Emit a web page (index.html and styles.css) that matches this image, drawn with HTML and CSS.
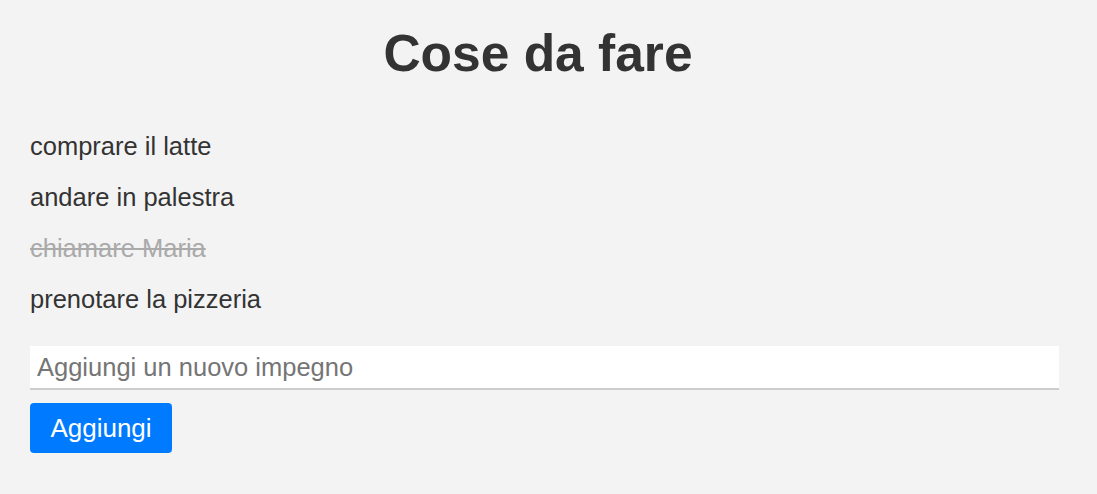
FILE: index.html
```html
<!DOCTYPE html>
<html lang="it">
<head>
<meta charset="utf-8">
<title>Cose da fare</title>
<link rel="stylesheet" href="styles.css">
</head>
<body>
<main class="app">
  <h1 class="title">Cose da fare</h1>
  <ul class="todo-list">
    <li class="todo">comprare il latte</li>
    <li class="todo">andare in palestra</li>
    <li class="todo done">chiamare Maria</li>
    <li class="todo">prenotare la pizzeria</li>
  </ul>
  <form class="add-form">
    <input class="add-input" type="text" placeholder="Aggiungi un nuovo impegno">
    <button class="add-btn" type="button">Aggiungi</button>
  </form>
</main>
</body>
</html>
```
FILE: styles.css
```css
html, body {
  margin: 0;
  padding: 0;
  background: #f3f3f3;
}
body {
  font-family: "Liberation Sans", Arial, Helvetica, sans-serif;
  color: #333;
}
.app {
  padding: 23px 38px 0 30px;
}
.title {
  margin: 0;
  padding-right: 13px;
  font-size: 51.5px;
  line-height: 60px;
  font-weight: bold;
  text-align: center;
  color: #333;
}
.todo-list {
  list-style: none;
  margin: 0;
  padding: 38px 0 0;
}
.todo {
  font-size: 25.5px;
  line-height: 31px;
  padding: 10px 0;
  height: 31px;
}
.todo:last-child {
  height: 32px;
}
.todo.done {
  color: #aaa;
  text-decoration: line-through;
}
.add-form {
  display: flex;
  flex-direction: column;
  align-items: flex-start;
  gap: 13px;
  padding-top: 20px;
}
.add-input {
  box-sizing: border-box;
  width: 100%;
  height: 44px;
  border: none;
  border-bottom: 2px solid #ccc;
  background: #fff;
  padding: 0 7px;
  font-family: inherit;
  font-size: 25.5px;
  color: #333;
  outline: none;
}
.add-input::placeholder {
  color: #757575;
}
.add-btn {
  box-sizing: border-box;
  height: 50px;
  width: 142px;
  border: none;
  border-radius: 4px;
  background: #007bff;
  color: #fff;
  font-family: inherit;
  font-size: 26px;
  padding: 0;
}
```
